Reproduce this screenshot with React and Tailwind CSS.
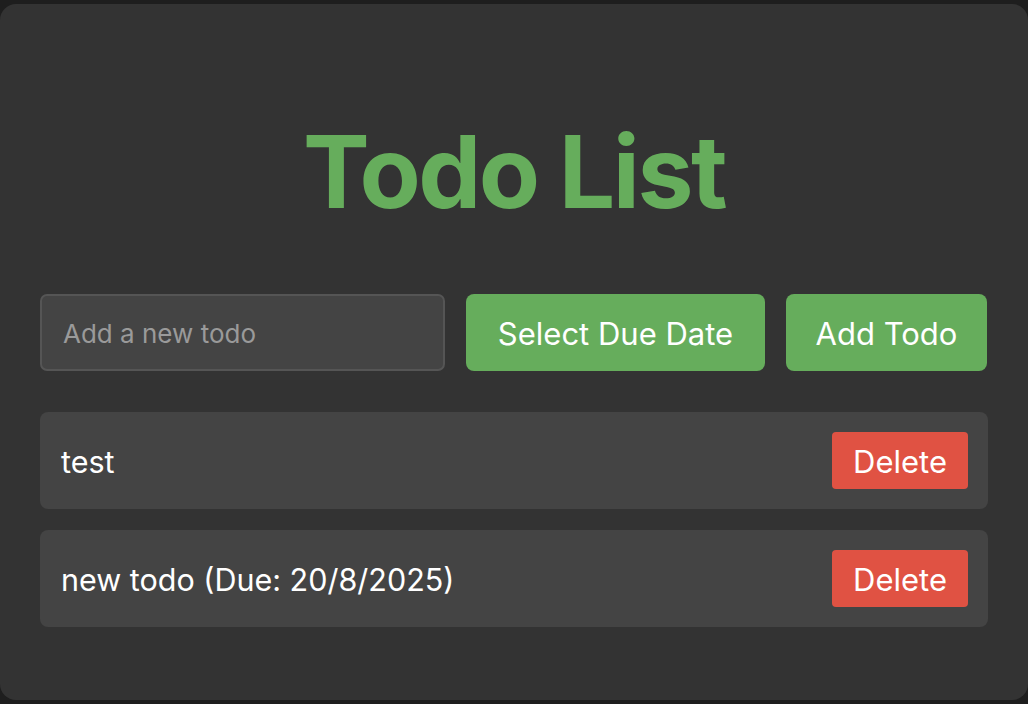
import React from "react";

export default function App() {
  const todos = [
    { id: 1, text: "test" },
    { id: 2, text: "new todo (Due: 20/8/2025)" },
  ];
  return (
    <div
      className="w-[1028px] h-[704px] bg-[#1e1e1e] pt-[4px] pb-[4px]"
      style={{ fontFamily: "Inter, 'Noto Sans', sans-serif" }}
    >
      <div className="h-[696px] bg-[#333333] rounded-[16px] px-[40px] pt-[108px]">
        <h1 className="text-center text-[#66ad5c] font-bold text-[100px] leading-[120px] tracking-[-2.5px]">
          Todo List
        </h1>
        <div className="flex gap-[21px] mt-[62px]">
          <input
            className="w-[405px] h-[77px] bg-[#444444] border-2 border-[#555555] rounded-[7px] px-[21px] pt-[2px] text-[26px] text-white placeholder:text-[#9a9a9a] outline-none"
            placeholder="Add a new todo"
          />
          <button className="w-[299px] h-[77px] bg-[#66ad5c] rounded-[8px] text-white text-[31px] pt-[3px]">
            Select Due Date
          </button>
          <button className="w-[201px] h-[77px] bg-[#66ad5c] rounded-[8px] text-white text-[31px] pt-[3px]">
            Add Todo
          </button>
        </div>
        <ul className="mt-[41px] flex flex-col gap-[21px]">
          {todos.map((t) => (
            <li
              key={t.id}
              className="h-[97px] bg-[#444444] rounded-[8px] flex items-center justify-between pl-[21px] pr-[20px]"
            >
              <span className="text-white text-[30.5px] pt-[3px]">{t.text}</span>
              <button className="w-[136px] h-[57px] bg-[#e05243] rounded-[4px] text-white text-[31px] pt-[3px]">
                Delete
              </button>
            </li>
          ))}
        </ul>
      </div>
    </div>
  );
}
